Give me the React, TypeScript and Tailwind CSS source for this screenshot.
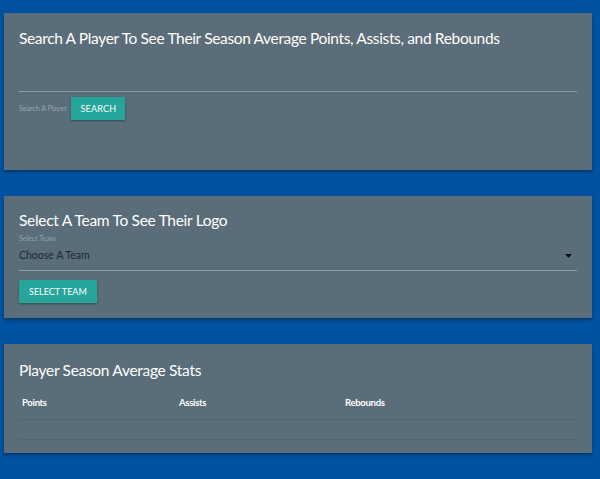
import React from "react";

export default function App() {
  const stats: string[] = ["Points", "Assists", "Rebounds"];
  return (
    <div
      className="min-h-[479px] w-[600px] bg-[#0252a2] pt-[13px] pb-[25px] pl-[4px] pr-[8px] flex flex-col gap-[26px]"
      style={{ fontFamily: "Lato, 'Open Sans', sans-serif" }}
    >
      {/* search card */}
      <div className="h-[157px] bg-[#5a6d78] shadow-[0_2px_3px_rgba(0,0,0,0.35)] px-[15px] pt-[13px]">
        <h2 className="text-[15.5px] leading-[24px] text-white tracking-[-0.35px]">
          Search A Player To See Their Season Average Points, Assists, and Rebounds
        </h2>
        <div className="mt-[41px] border-b border-[#8a9ba5]" />
        <div className="flex items-center mt-[5px]">
          <span className="text-[7px] text-[#9aa8b0]">Search A Player</span>
          <button className="ml-[5px] h-[23px] px-[9px] bg-[#26a69a] text-white text-[9px] tracking-[0.2px] shadow-[0_1px_2px_rgba(0,0,0,0.35)]">
            SEARCH
          </button>
        </div>
      </div>

      {/* team card */}
      <div className="h-[122px] bg-[#5a6d78] shadow-[0_2px_3px_rgba(0,0,0,0.35)] px-[15px] pt-[13px]">
        <h2 className="text-[15.5px] leading-[22px] text-white tracking-[-0.3px]">
          Select A Team To See Their Logo
        </h2>
        <div className="mt-[3px] text-[7px] leading-[8px] text-[#93a2aa]">Select Team</div>
        <div className="flex items-center justify-between h-[29px] border-b border-[#8a9ba5] pr-[5px]">
          <span className="text-[10.5px] text-[#1e2a33]">Choose A Team</span>
          <svg width="7" height="4" viewBox="0 0 7 4">
            <path d="M0 0H7L3.5 4Z" fill="#111" />
          </svg>
        </div>
        <button className="mt-[9px] h-[23px] px-[10px] bg-[#26a69a] text-white text-[9px] shadow-[0_1px_2px_rgba(0,0,0,0.35)]">
          SELECT TEAM
        </button>
      </div>

      {/* stats card */}
      <div className="h-[109px] bg-[#5a6d78] shadow-[0_2px_3px_rgba(0,0,0,0.35)] px-[15px] pt-[15px]">
        <h2 className="text-[15.5px] leading-[22px] text-white tracking-[-0.3px]">
          Player Season Average Stats
        </h2>
        <div className="mt-[11px] grid grid-cols-[157px_166px_1fr] pl-[3px] pt-[4px] h-[28px] items-start border-b border-[#52646e]">
          {stats.map((s) => (
            <span key={s} className="text-[9.5px] font-bold text-white tracking-[-0.3px]">
              {s}
            </span>
          ))}
        </div>
        <div className="h-[20px] border-b border-[#52646e]" />
      </div>
    </div>
  );
}
